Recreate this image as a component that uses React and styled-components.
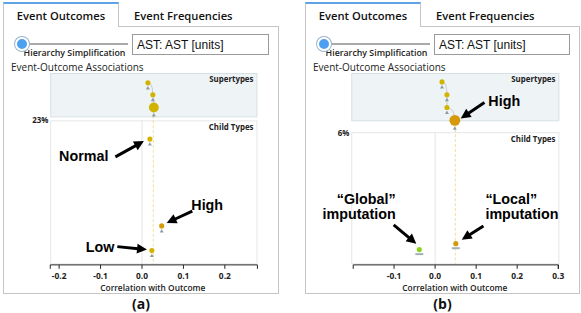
import React from "react";
import styled, { createGlobalStyle } from "styled-components";

const Global = createGlobalStyle`
  body {
    margin: 0;
    background: #fff;
    font-family: "Open Sans", "Liberation Sans", sans-serif;
  }
`;

const Figure = styled.div`
  display: flex;
  gap: 26px;
  padding: 2px 0 0 3px;
`;

const Panel = styled.div`
  width: ${(p) => p.$w}px;
  display: flex;
  flex-direction: column;
`;

const TabStrip = styled.div`
  display: flex;
  height: 25px;
`;

const Tab = styled.div`
  box-sizing: border-box;
  width: ${(p) => (p.$active ? "116px" : "auto")};
  padding: ${(p) => (p.$active ? "0" : "0 16px 0 15px")};
  display: flex;
  align-items: center;
  justify-content: center;
  font-size: 11.2px;
  font-weight: 600;
  color: #111;
  background: #fff;
  border-top: ${(p) => (p.$active ? "2px solid #5ea3e6" : "2px solid transparent")};
  border-left: ${(p) => (p.$active ? "1px solid #c4c4c4" : "none")};
  border-right: ${(p) => (p.$active ? "1px solid #c4c4c4" : "none")};
  border-bottom: ${(p) => (p.$active ? "none" : "1px solid #c4c4c4")};
`;

const TabFill = styled.div`
  flex: 1;
  border-bottom: 1px solid #c4c4c4;
`;

const Body = styled.div`
  height: 266px;
  border: 1px solid #c4c4c4;
  border-top: none;
  display: flex;
  flex-direction: column;
`;

const Controls = styled.div`
  display: flex;
  gap: 4px;
  padding: 7px 9px 0 11px;
`;

const Slider = styled.div`
  width: 113px;
  display: flex;
  flex-direction: column;
  align-items: center;
`;

const Track = styled.div`
  position: relative;
  width: 100%;
  height: 2px;
  margin-top: 9px;
  background: #a9a9a9;
`;

const Knob = styled.div`
  position: absolute;
  left: 0;
  top: -6px;
  width: 10px;
  height: 10px;
  border-radius: 50%;
  background: #4d9ff0;
  border: 2px solid #fff;
  box-shadow: 0 0 0 1px #9cb4cc;
`;

const SliderLabel = styled.div`
  margin-top: 2px;
  padding-left: 6px;
  font-size: 8.8px;
  font-weight: 600;
  color: #222;
  white-space: nowrap;
`;

const Input = styled.div`
  box-sizing: border-box;
  flex: 1;
  height: 21px;
  border: 1px solid #9a9a9a;
  padding: 0 4px;
  display: flex;
  align-items: center;
  font-family: "Liberation Sans", sans-serif;
  font-size: 12px;
  color: #111;
`;

const Title = styled.div`
  margin: 2px 0 0 7px;
  height: 12px;
  line-height: 12px;
  font-size: 10px;
  color: #222;
`;

const ChartSvg = styled.svg`
  display: block;
  width: 100%;
  height: 223px;
  font-family: "Open Sans", "Liberation Sans", sans-serif;
`;

const Caption = styled.div`
  text-align: center;
  margin-top: 1px;
  line-height: 18px;
  font-size: 14px;
  font-weight: 700;
  color: #111;
`;

const YELLOW = "#d2b400";
const ORANGE = "#d49a0c";
const GREEN = "#8fd21c";

function Arrow({ from, to }) {
  const [x1, y1] = from;
  const [x2, y2] = to;
  const dx = x2 - x1;
  const dy = y2 - y1;
  const len = Math.hypot(dx, dy);
  const ux = dx / len;
  const uy = dy / len;
  const head = 10;
  const half = 5;
  const bx = x2 - ux * head;
  const by = y2 - uy * head;
  const pts = [
    [x2, y2],
    [bx - uy * half, by + ux * half],
    [bx + uy * half, by - ux * half],
  ]
    .map((p) => p.join(","))
    .join(" ");
  return (
    <g>
      <line x1={x1} y1={y1} x2={bx + ux} y2={by + uy} stroke="#000" strokeWidth="3" />
      <polygon points={pts} fill="#000" />
    </g>
  );
}

function Dot({ x, y, r = 2.6, color = YELLOW, marker = "tri" }) {
  return (
    <g>
      {marker === "tri" ? (
        <polygon
          points={`${x},${y + r + 0.5} ${x - 2},${y + r + 4} ${x + 2},${y + r + 4}`}
          fill="#8b9ca4"
        />
      ) : (
        <rect x={x - 4} y={y + r + 1} width="8" height="2" fill="#9fb0b8" />
      )}
      <circle cx={x} cy={y} r={r} fill={color} />
    </g>
  );
}

function Axis({ x0, x1, y, ticks, scale }) {
  return (
    <g>
      <line x1={x0} y1={y} x2={x1} y2={y} stroke="#222" strokeWidth="1" />
      <line x1={x0} y1={y} x2={x0} y2={y + 4} stroke="#222" />
      <line x1={x1} y1={y} x2={x1} y2={y + 4} stroke="#222" />
      {ticks.map((t) => (
        <g key={t.v}>
          <line x1={scale(t.v)} y1={y} x2={scale(t.v)} y2={y + 4} stroke="#222" />
          {t.label && (
            <text
              x={scale(t.v)}
              y={y + 14}
              textAnchor="middle"
              fontSize="8.5"
              fontWeight="700"
              fill="#222"
            >
              {t.label}
            </text>
          )}
        </g>
      ))}
    </g>
  );
}

const Small = (props) => <text fontSize="8" fontWeight="700" fill="#222" {...props} />;
const Big = (props) => (
  <text
    fontFamily="'Liberation Sans', sans-serif"
    fontSize="14.5"
    fontWeight="700"
    fill="#000"
    {...props}
  />
);

function ChartA() {
  const sx = (v) => 138 + v * 420;
  return (
    <ChartSvg viewBox="0 0 274 223">
      <rect x="45.5" y="0.5" width="209" height="44" fill="#eef3f5" stroke="#d6e0e4" />
      <Small x="251" y="9" textAnchor="end">Supertypes</Small>
      <Small x="43" y="51" textAnchor="end">23%</Small>
      <rect x="45.5" y="48.5" width="209" height="145" fill="none" stroke="#e6e6e6" />
      <Small x="251" y="58" textAnchor="end">Child Types</Small>
      <line x1={sx(0)} y1="48" x2={sx(0)} y2="194" stroke="#e4e4e4" />
      <line x1="149.5" y1="38" x2="149.5" y2="194" stroke="#eedf9a" strokeDasharray="3 2" />
      <path d="M144 10 Q149 10 149 22 Q150 24 150 35" fill="none" stroke="#c8c8c8" />
      <Dot x={144} y={10} />
      <Dot x={149} y={22} />
      <Dot x={150} y={35} r={5} />
      <Dot x={146} y={67} />
      <Dot x={158} y={155} color={ORANGE} />
      <Dot x={148} y={180} />
      <Axis
        x0={45}
        x1={255}
        y={194.5}
        scale={sx}
        ticks={[
          { v: -0.2, label: "-0.2" },
          { v: -0.1, label: "-0.1" },
          { v: 0, label: "0.0" },
          { v: 0.1, label: "0.1" },
          { v: 0.2, label: "0.2" },
        ]}
      />
      <text x="149" y="221" textAnchor="middle" fontSize="8.5" fontWeight="600" fill="#222">
        Correlation with Outcome
      </text>
      <Big x="54" y="89">Normal</Big>
      <Arrow from={[111, 85]} to={[140, 69]} />
      <Big x="188" y="139">High</Big>
      <Arrow from={[189, 140]} to={[163, 152]} />
      <Big x="81" y="181">Low</Big>
      <Arrow from={[113, 176]} to={[143, 179]} />
    </ChartSvg>
  );
}

function ChartB() {
  const sx = (v) => 129 + v * 416;
  return (
    <ChartSvg viewBox="0 0 273 223">
      <rect x="44.5" y="0.5" width="210" height="48" fill="#eef3f5" stroke="#d6e0e4" />
      <Small x="251" y="9" textAnchor="end">Supertypes</Small>
      <Small x="42" y="64" textAnchor="end">6%</Small>
      <rect x="44.5" y="60.5" width="210" height="133" fill="none" stroke="#e6e6e6" />
      <Small x="251" y="70" textAnchor="end">Child Types</Small>
      <line x1={sx(0)} y1="60" x2={sx(0)} y2="194" stroke="#e4e4e4" />
      <line x1="149.5" y1="52" x2="149.5" y2="194" stroke="#eedf9a" strokeDasharray="3 2" />
      <path d="M136 9 Q141 9 141 22 L141 35 Q149 36 149 48" fill="none" stroke="#c8c8c8" />
      <Dot x={136} y={9} />
      <Dot x={141} y={22} />
      <Dot x={141} y={35} />
      <Dot x={149} y={48} r={5.5} color={ORANGE} />
      <Dot x={113} y={179} color={GREEN} marker="bar" />
      <Dot x={150} y={173} color={ORANGE} marker="bar" />
      <Axis
        x0={46}
        x1={254}
        y={194.5}
        scale={sx}
        ticks={[
          { v: -0.1, label: "-0.1" },
          { v: 0, label: "0.0" },
          { v: 0.1, label: "0.1" },
          { v: 0.2, label: "0.2" },
          { v: 0.3, label: "0.3" },
        ]}
      />
      <text x="149" y="221" textAnchor="middle" fontSize="8.5" fontWeight="600" fill="#222">
        Correlation with Outcome
      </text>
      <Big x="183" y="33">High</Big>
      <Arrow from={[179, 30]} to={[155, 46]} />
      <Big x="89" y="133" textAnchor="end">“Global”</Big>
      <Big x="89" y="148" textAnchor="end">imputation</Big>
      <Arrow from={[87, 154]} to={[110, 173]} />
      <Big x="180" y="133">“Local”</Big>
      <Big x="180" y="148">imputation</Big>
      <Arrow from={[178, 155]} to={[156, 169]} />
    </ChartSvg>
  );
}

function OutcomePanel({ width, chart, caption }) {
  return (
    <Panel $w={width}>
      <TabStrip>
        <Tab $active>Event Outcomes</Tab>
        <Tab>Event Frequencies</Tab>
        <TabFill />
      </TabStrip>
      <Body>
        <Controls>
          <Slider>
            <Track>
              <Knob />
            </Track>
            <SliderLabel>Hierarchy Simplification</SliderLabel>
          </Slider>
          <Input>AST: AST [units]</Input>
        </Controls>
        <Title>Event-Outcome Associations</Title>
        {chart}
      </Body>
      <Caption>{caption}</Caption>
    </Panel>
  );
}

export default function App() {
  return (
    <>
      <Global />
      <Figure>
        <OutcomePanel width={276} chart={<ChartA />} caption="(a)" />
        <OutcomePanel width={275} chart={<ChartB />} caption="(b)" />
      </Figure>
    </>
  );
}
